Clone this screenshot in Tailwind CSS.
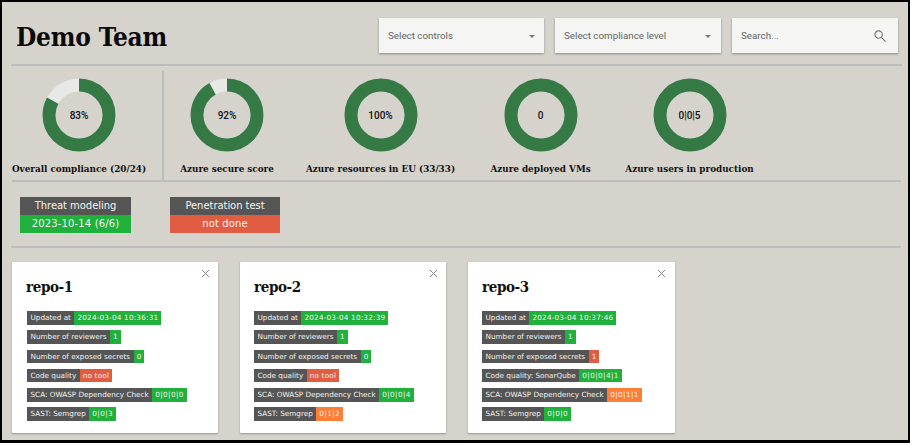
<!doctype html>
<html><head><meta charset="utf-8"><script src="https://cdn.jsdelivr.net/npm/@tailwindcss/browser@4"></script></head>
<body class="bg-white">
<div class="w-[910px] h-[443px] border-2 border-black border-b-[3px] bg-[#d6d2cc] overflow-hidden font-['Roboto',sans-serif]">
  <header class="h-[64px] ml-[9px] mr-[6px] border-b-2 border-[#bcbebd] flex items-start pr-[4px]">
    <h1 class="mt-[16px] ml-[5px] font-['DejaVu_Serif',serif] font-stretch-condensed font-bold text-[26px] tracking-[-0.2px] leading-[38px] text-[#0a0a0a] mr-auto">Demo Team</h1>
    <div class="mt-[16px] flex gap-[11px] text-[9.8px] text-[#666]">
      <div class="w-[165px] h-[35px] pt-[1px] bg-[#f5f5f3] shadow-[0_1px_2px_rgba(0,0,0,0.35)] flex items-center justify-between pl-[9px] pr-[9px]">Select controls<svg width="6" height="3" viewBox="0 0 6 3"><path d="M0 0h6L3 3z" fill="#777"/></svg></div>
      <div class="w-[166px] h-[35px] pt-[1px] bg-[#f5f5f3] shadow-[0_1px_2px_rgba(0,0,0,0.35)] flex items-center justify-between pl-[9px] pr-[10px]">Select compliance level<svg width="6" height="3" viewBox="0 0 6 3"><path d="M0 0h6L3 3z" fill="#777"/></svg></div>
      <div class="w-[166px] h-[35px] pt-[1px] bg-[#f5f5f3] shadow-[0_1px_2px_rgba(0,0,0,0.35)] flex items-center justify-between pl-[9px] pr-[12px]">Search...<svg width="12" height="12" viewBox="0 0 13 13" fill="none" stroke="#777" stroke-width="1.2"><circle cx="5" cy="5" r="4"/><path d="M8 8l4.5 4.5"/></svg></div>
    </div>
  </header>
  <section class="h-[116px] ml-[10px] mr-[7px] border-b-2 border-[#bcbebd] flex items-start font-['DejaVu_Serif',serif] font-stretch-condensed font-bold text-[9.8px] text-[#111]">
    <div class="w-[134px] mt-[12px] flex flex-col items-center">
      <div class="relative w-[74px] h-[74px]"><svg viewBox="0 0 74 74" class="w-full h-full -rotate-90"><circle cx="37" cy="37" r="30" fill="none" stroke="#e8e8e6" stroke-width="13"/><circle cx="37" cy="37" r="30" fill="none" stroke="#357a45" stroke-width="13" pathLength="100" stroke-dasharray="83 100"/></svg><span class="absolute inset-0 flex items-center justify-center font-['Roboto',sans-serif] font-stretch-normal font-medium text-[10px]">83%</span></div>
      <p class="mt-[10px] whitespace-nowrap leading-[14px]">Overall compliance (20/24)</p>
    </div>
    <div class="w-[2px] h-[110px] bg-[#bcbebd] ml-[16px] mt-[5px]"></div>
    <div class="w-[94px] ml-[16px] mt-[12px] flex flex-col items-center">
      <div class="relative w-[74px] h-[74px]"><svg viewBox="0 0 74 74" class="w-full h-full -rotate-90"><circle cx="37" cy="37" r="30" fill="none" stroke="#e8e8e6" stroke-width="13"/><circle cx="37" cy="37" r="30" fill="none" stroke="#357a45" stroke-width="13" pathLength="100" stroke-dasharray="92 100"/></svg><span class="absolute inset-0 flex items-center justify-center font-['Roboto',sans-serif] font-stretch-normal font-medium text-[10px]">92%</span></div>
      <p class="mt-[10px] whitespace-nowrap leading-[14px]">Azure secure score</p>
    </div>
    <div class="w-[147px] ml-[33px] mt-[12px] flex flex-col items-center">
      <div class="relative w-[74px] h-[74px]"><svg viewBox="0 0 74 74" class="w-full h-full"><circle cx="37" cy="37" r="30" fill="none" stroke="#357a45" stroke-width="13"/></svg><span class="absolute inset-0 flex items-center justify-center font-['Roboto',sans-serif] font-stretch-normal font-medium text-[10px]">100%</span></div>
      <p class="mt-[10px] whitespace-nowrap leading-[14px]">Azure resources in EU (33/33)</p>
    </div>
    <div class="w-[103px] ml-[35px] mt-[12px] flex flex-col items-center">
      <div class="relative w-[74px] h-[74px]"><svg viewBox="0 0 74 74" class="w-full h-full"><circle cx="37" cy="37" r="30" fill="none" stroke="#357a45" stroke-width="13"/></svg><span class="absolute inset-0 flex items-center justify-center font-['Roboto',sans-serif] font-stretch-normal font-medium text-[10px]">0</span></div>
      <p class="mt-[10px] whitespace-nowrap leading-[14px]">Azure deployed VMs</p>
    </div>
    <div class="w-[129px] ml-[33px] mt-[12px] flex flex-col items-center">
      <div class="relative w-[74px] h-[74px]"><svg viewBox="0 0 74 74" class="w-full h-full"><circle cx="37" cy="37" r="30" fill="none" stroke="#357a45" stroke-width="13"/></svg><span class="absolute inset-0 flex items-center justify-center font-['Roboto',sans-serif] font-stretch-normal font-medium text-[10px]">0|0|5</span></div>
      <p class="mt-[10px] whitespace-nowrap leading-[14px]">Azure users in production</p>
    </div>
  </section>
  <section class="h-[66px] ml-[9px] mr-[7px] border-b-2 border-[#bcbebd] pt-[15px] pl-[9px] flex gap-[39px] font-['DejaVu_Sans',sans-serif] text-[10px] tracking-[-0.05px] text-[#f2f2f2] text-center">
    <div class="w-[111px]"><div class="h-[18px] leading-[18px] bg-[#555]">Threat modeling</div><div class="h-[18px] leading-[18px] tracking-[0.15px] bg-[#20b13c]">2023-10-14 (6/6)</div></div>
    <div class="w-[110px]"><div class="h-[18px] leading-[18px] bg-[#555]">Penetration test</div><div class="h-[18px] leading-[18px] tracking-[0.15px] bg-[#e05d44]">not done</div></div>
  </section>
  <main class="ml-[10px] mt-[14px] flex gap-[22px] font-['DejaVu_Sans',sans-serif] text-[7.25px] leading-[13.5px] text-[#f2f2f2]">
    <article class="relative w-[206px] h-[171px] bg-white rounded-[1px] shadow-[0_1px_2px_rgba(0,0,0,0.3)] pl-[15px] pt-[14px]">
      <span class="absolute right-[8px] top-[7px]"><svg width="9" height="9" viewBox="0 0 9 9" stroke="#888" stroke-width="1"><path d="M1 1l7 7M8 1l-7 7"/></svg></span>
      <h2 class="font-['DejaVu_Serif',serif] font-stretch-condensed font-bold text-[15px] tracking-[-0.4px] leading-[22px] text-[#111] mb-[13px] -ml-[1px]">repo-1</h2>
      <div class="flex flex-col items-start gap-[5.8px]">
        <div class="flex"><span class="bg-[#555] px-[3.5px]">Updated at</span><span class="bg-[#20b13c] px-[3px] tracking-[0.2px]">2024-03-04 10:36:31</span></div>
        <div class="flex"><span class="bg-[#555] px-[3.5px]">Number of reviewers</span><span class="bg-[#20b13c] px-[3px] tracking-[0.2px]">1</span></div>
        <div class="flex"><span class="bg-[#555] px-[3.5px]">Number of exposed secrets</span><span class="bg-[#20b13c] px-[3px] tracking-[0.2px]">0</span></div>
        <div class="flex"><span class="bg-[#555] px-[3.5px]">Code quality</span><span class="bg-[#e05d44] px-[3px] tracking-[0.2px]">no tool</span></div>
        <div class="flex"><span class="bg-[#555] px-[3.5px]">SCA: OWASP Dependency Check</span><span class="bg-[#20b13c] px-[3px] tracking-[0.4px]">0|0|0|0</span></div>
        <div class="flex"><span class="bg-[#555] px-[3.5px]">SAST: Semgrep</span><span class="bg-[#20b13c] px-[3px] tracking-[0.4px]">0|0|3</span></div>
      </div>
    </article>
    <article class="relative w-[206px] h-[171px] bg-white rounded-[1px] shadow-[0_1px_2px_rgba(0,0,0,0.3)] pl-[14px] pt-[14px]">
      <span class="absolute right-[8px] top-[7px]"><svg width="9" height="9" viewBox="0 0 9 9" stroke="#888" stroke-width="1"><path d="M1 1l7 7M8 1l-7 7"/></svg></span>
      <h2 class="font-['DejaVu_Serif',serif] font-stretch-condensed font-bold text-[15px] tracking-[-0.4px] leading-[22px] text-[#111] mb-[13px]">repo-2</h2>
      <div class="flex flex-col items-start gap-[5.8px]">
        <div class="flex"><span class="bg-[#555] px-[3.5px]">Updated at</span><span class="bg-[#20b13c] px-[3px] tracking-[0.2px]">2024-03-04 10:32:39</span></div>
        <div class="flex"><span class="bg-[#555] px-[3.5px]">Number of reviewers</span><span class="bg-[#20b13c] px-[3px] tracking-[0.2px]">1</span></div>
        <div class="flex"><span class="bg-[#555] px-[3.5px]">Number of exposed secrets</span><span class="bg-[#20b13c] px-[3px] tracking-[0.2px]">0</span></div>
        <div class="flex"><span class="bg-[#555] px-[3.5px]">Code quality</span><span class="bg-[#e05d44] px-[3px] tracking-[0.2px]">no tool</span></div>
        <div class="flex"><span class="bg-[#555] px-[3.5px]">SCA: OWASP Dependency Check</span><span class="bg-[#20b13c] px-[3px] tracking-[0.4px]">0|0|0|4</span></div>
        <div class="flex"><span class="bg-[#555] px-[3.5px]">SAST: Semgrep</span><span class="bg-[#fe7d37] px-[3px] tracking-[0.4px]">0|1|2</span></div>
      </div>
    </article>
    <article class="relative w-[207px] h-[171px] bg-white rounded-[1px] shadow-[0_1px_2px_rgba(0,0,0,0.3)] pl-[14px] pt-[14px]">
      <span class="absolute right-[9px] top-[7px]"><svg width="9" height="9" viewBox="0 0 9 9" stroke="#888" stroke-width="1"><path d="M1 1l7 7M8 1l-7 7"/></svg></span>
      <h2 class="font-['DejaVu_Serif',serif] font-stretch-condensed font-bold text-[15px] tracking-[-0.4px] leading-[22px] text-[#111] mb-[13px]">repo-3</h2>
      <div class="flex flex-col items-start gap-[5.8px]">
        <div class="flex"><span class="bg-[#555] px-[3.5px]">Updated at</span><span class="bg-[#20b13c] px-[3px] tracking-[0.2px]">2024-03-04 10:37:46</span></div>
        <div class="flex"><span class="bg-[#555] px-[3.5px]">Number of reviewers</span><span class="bg-[#20b13c] px-[3px] tracking-[0.2px]">1</span></div>
        <div class="flex"><span class="bg-[#555] px-[3.5px]">Number of exposed secrets</span><span class="bg-[#e05d44] px-[3px] tracking-[0.2px]">1</span></div>
        <div class="flex"><span class="bg-[#555] px-[3.5px]">Code quality: SonarQube</span><span class="bg-[#20b13c] px-[3px] tracking-[0.4px]">0|0|0|4|1</span></div>
        <div class="flex"><span class="bg-[#555] px-[3.5px]">SCA: OWASP Dependency Check</span><span class="bg-[#fe7d37] px-[3px] tracking-[0.4px]">0|0|1|1</span></div>
        <div class="flex"><span class="bg-[#555] px-[3.5px]">SAST: Semgrep</span><span class="bg-[#20b13c] px-[3px] tracking-[0.4px]">0|0|0</span></div>
      </div>
    </article>
  </main>
</div>
</body></html>
